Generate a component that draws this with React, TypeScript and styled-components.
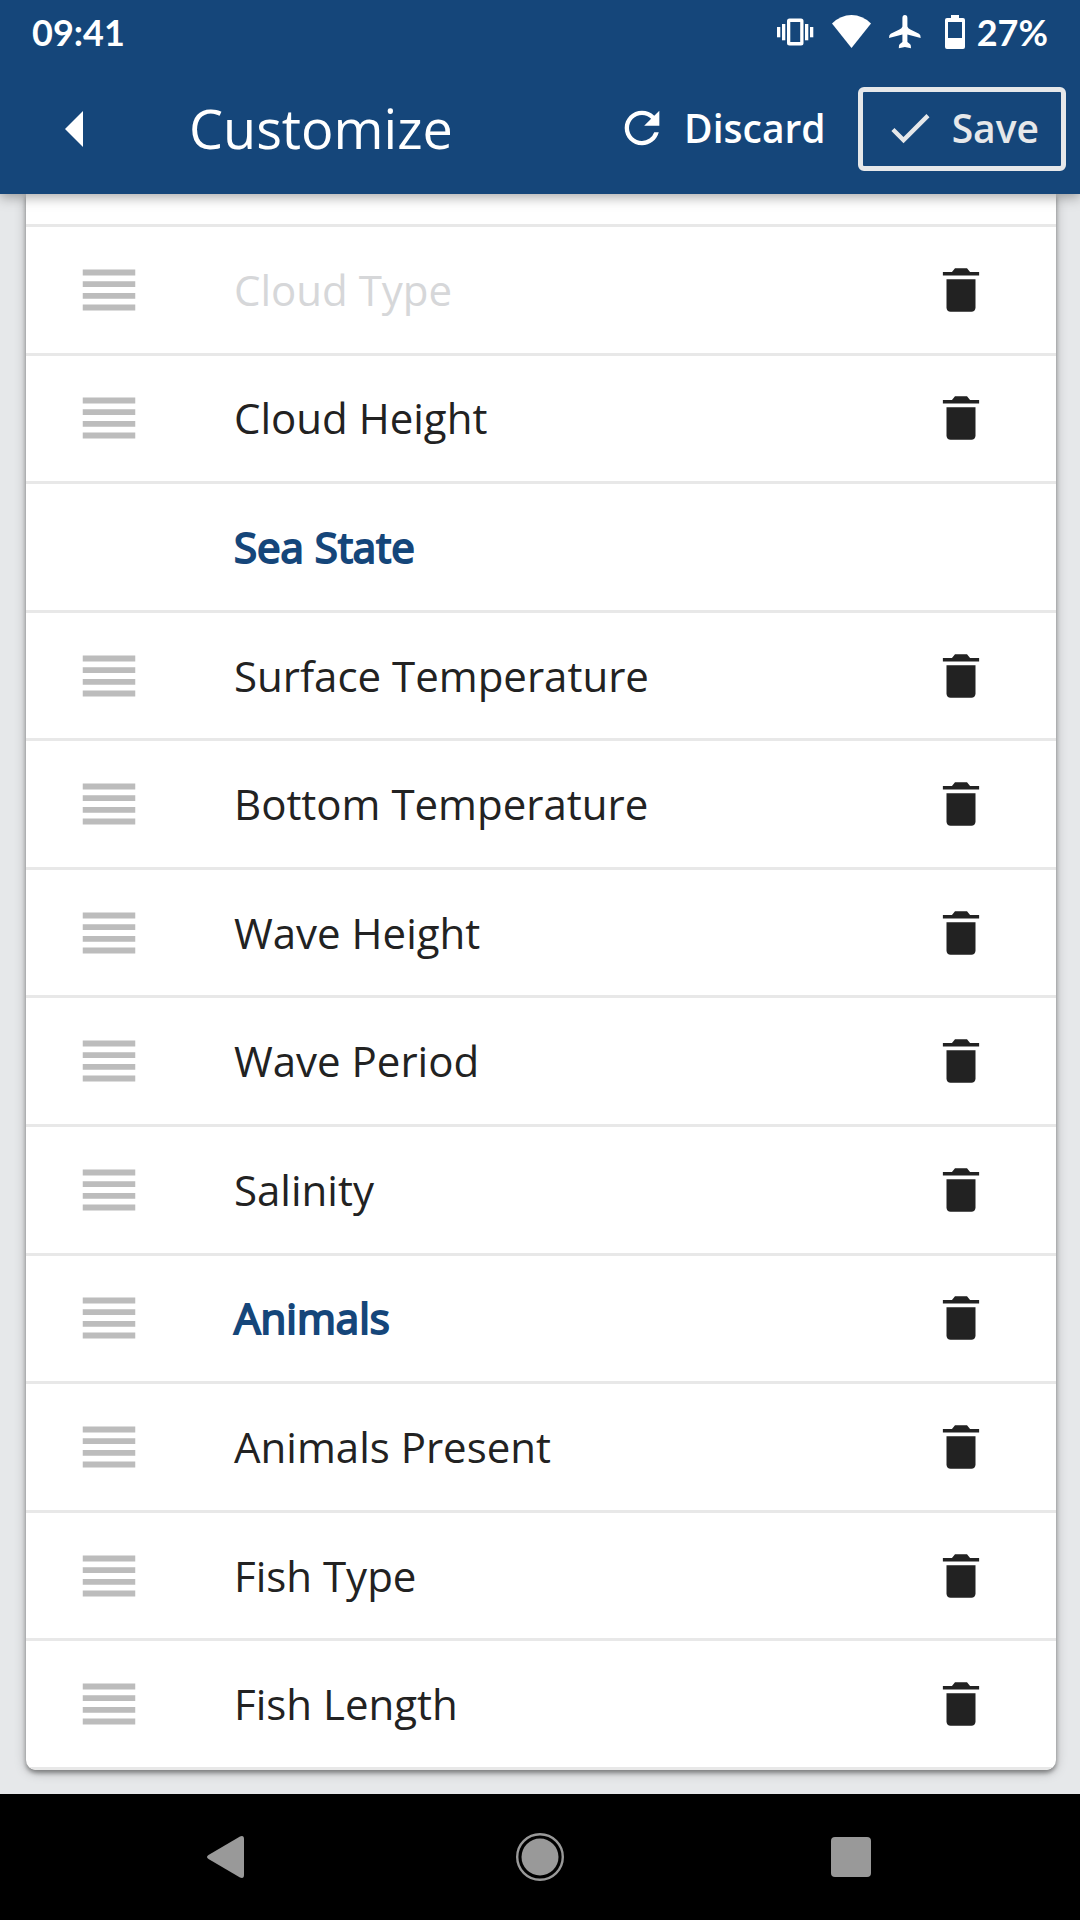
import React from "react";
import styled, { createGlobalStyle } from "styled-components";
import { MdCheck, MdRefresh, MdReorder } from "react-icons/md";

const color = {
  brand: "#15467a",
  page: "#e6e8ea",
  rule: "#e8e8e8",
  ink: "#222222",
  muted: "#d6d7d9",
  handle: "#bcbcbc",
  system: "#999999",
};

const GlobalStyle = createGlobalStyle`
  *, *::before, *::after { box-sizing: border-box; }
  body {
    margin: 0;
    background: ${color.page};
    color: ${color.ink};
    font-family: "Open Sans", "Noto Sans", sans-serif;
  }
  button {
    margin: 0;
    padding: 0;
    border: 0;
    background: none;
    color: inherit;
    font: inherit;
    cursor: pointer;
  }
  svg { display: block; flex: none; }
`;

const Screen = styled.div`
  display: flex;
  flex-direction: column;
  min-height: 100vh;
`;

const Header = styled.header`
  position: relative;
  z-index: 1;
  background: ${color.brand};
  color: #ffffff;
  box-shadow: 0 3px 12px rgba(0, 0, 0, 0.35);
`;

const StatusBar = styled.div`
  display: flex;
  align-items: center;
  justify-content: space-between;
  height: 63px;
  padding: 0 32px;
  font: 700 36px/44px Lato, "Open Sans", sans-serif;
`;

const StatusIcons = styled.div`
  display: flex;
  align-items: center;
  gap: 18px;
`;

const Battery = styled.div`
  display: flex;
  align-items: center;
  gap: 12px;
  margin-left: 6px;
`;

const Toolbar = styled.div`
  display: flex;
  align-items: center;
  height: 131px;
  padding: 0 14px 0 49px;
`;

const BackButton = styled.button`
  padding: 24px 16px;
`;

const Title = styled.h1`
  flex: 1;
  margin: 0;
  padding: 0 0 2px 90px;
  font-size: 54px;
  line-height: 72px;
  font-weight: 400;
`;

const ToolbarButton = styled.button<{ $outlined?: boolean }>`
  display: flex;
  align-items: center;
  gap: 16px;
  height: 84px;
  padding: 0 ${(p) => (p.$outlined ? 22 : 32)}px 2px 21px;
  border: ${(p) => (p.$outlined ? `5px solid ${color.page}` : "0")};
  border-radius: 6px;
  color: ${(p) => (p.$outlined ? color.page : "#ffffff")};
  font-size: 39px;
  line-height: 52px;
  font-weight: 600;
`;

const Main = styled.main`
  flex: 1;
  display: flex;
  flex-direction: column;
  padding: 0 24px 24px 26px;
`;

const Card = styled.ul`
  flex: 1;
  display: flex;
  flex-direction: column;
  margin: 0;
  padding: 0;
  list-style: none;
  overflow: hidden;
  background: #ffffff;
  border-radius: 0 0 10px 10px;
  box-shadow: 0 3px 4px rgba(0, 0, 0, 0.35), 0 2px 12px rgba(0, 0, 0, 0.25);
`;

const HiddenRowEdge = styled.li`
  height: 33px;
  border-bottom: 3px solid ${color.rule};
`;

const Row = styled.li`
  flex: 1 0 120px;
  display: flex;
  align-items: center;
  padding: 0 66px 0 48px;
  border-bottom: 3px solid ${color.rule};
`;

const HandleSlot = styled.div`
  display: flex;
  width: 160px;
`;

const HandleButton = styled.button`
  color: ${color.handle};
  cursor: grab;
`;

const Label = styled.span<{ $muted?: boolean }>`
  flex: 1;
  font-size: 42px;
  line-height: 60px;
  color: ${(p) => (p.$muted ? color.muted : color.ink)};
`;

const SectionLabel = styled.h2`
  flex: 1;
  margin: 0;
  font-size: 42px;
  line-height: 60px;
  font-weight: 400;
  color: ${color.brand};
  -webkit-text-stroke: 2px ${color.brand};
`;

const NavBar = styled.nav`
  display: flex;
  align-items: center;
  justify-content: center;
  gap: 248px;
  height: 126px;
  background: #000000;
  color: ${color.system};
`;

type Item = { label: string; section?: boolean; muted?: boolean; locked?: boolean };

const items: Item[] = [
  { label: "Cloud Type", muted: true },
  { label: "Cloud Height" },
  { label: "Sea State", section: true, locked: true },
  { label: "Surface Temperature" },
  { label: "Bottom Temperature" },
  { label: "Wave Height" },
  { label: "Wave Period" },
  { label: "Salinity" },
  { label: "Animals", section: true },
  { label: "Animals Present" },
  { label: "Fish Type" },
  { label: "Fish Length" },
];

const BackIcon = () => (
  <svg width="18" height="36" viewBox="0 0 18 36" fill="currentColor" aria-hidden>
    <path d="M18 0v36L0 18z" />
  </svg>
);

const VibrateIcon = () => (
  <svg width="37" height="28" viewBox="0 0 37 28" fill="currentColor" aria-hidden>
    <rect x="0" y="9" width="3.3" height="10.300" />
    <rect x="5" y="6" width="3.3" height="16.300" />
    <rect x="28" y="6" width="3.3" height="16.300" />
    <rect x="33" y="9" width="3.3" height="10.300" />
    <path
      fillRule="evenodd"
      d="M12.500.500h11.500a2.500 2.500 0 0 1 2.500 2.500v22a2.500 2.500 0 0 1-2.500 2.500H12.500A2.500 2.500 0 0 1 10 25V3A2.500 2.500 0 0 1 12.500.500zM13.300 4v20h9.900V4z"
    />
  </svg>
);

const WifiIcon = () => (
  <svg width="39" height="36" viewBox="0 0 39 36" fill="currentColor" aria-hidden>
    <path d="M0 9.500Q8.500 1 19.500 1T39 9.500L19.500 34z" />
  </svg>
);

const AirplaneIcon = () => (
  <svg width="32" height="34" viewBox="0 0 32 34" fill="currentColor" aria-hidden>
    <path d="M13.400 3q0-3 2.500-3t2.500 3v8.500q.5 1.800 3 3l8.600 4.300q1.700 1 1.700 4.200L18.400 19.500V27l2.800 2.300q.8.700.8 4L15.900 32l-6.100 1.300q0-3.300.8-4L13.400 27v-7.500L0 23q0-3.200 1.700-4.200l8.700-4.300q2.500-1.200 3-3z" />
  </svg>
);

const BatteryIcon = () => (
  <svg width="20" height="34" viewBox="0 0 20 34" fill="currentColor" aria-hidden>
    <path
      fillRule="evenodd"
      d="M6 0h8v3h4a2 2 0 0 1 2 2v27a2 2 0 0 1-2 2H2a2 2 0 0 1-2-2V5a2 2 0 0 1 2-2h4zM3 7v16h14V7z"
    />
  </svg>
);

const TrashIcon = () => (
  <svg width="58" height="58" viewBox="0 0 512 512" fill={color.ink} aria-hidden>
    <path d="M128 412c0 20 16 36 36 36h184c20 0 36-16 36-36V160H128zM416 96h-80l-27-32H203l-27 32H96v32h320z" />
  </svg>
);

function ListRow({ item }: { item: Item }) {
  return (
    <Row>
      <HandleSlot>
        {!item.locked && (
          <HandleButton aria-label={`Reorder ${item.label}`}>
            <MdReorder size={70} />
          </HandleButton>
        )}
      </HandleSlot>
      {item.section ? (
        <SectionLabel>{item.label}</SectionLabel>
      ) : (
        <Label $muted={item.muted}>{item.label}</Label>
      )}
      {!item.locked && (
        <button aria-label={`Delete ${item.label}`}>
          <TrashIcon />
        </button>
      )}
    </Row>
  );
}

export default function App() {
  return (
    <Screen>
      <GlobalStyle />
      <Header>
        <StatusBar>
          <span>09:41</span>
          <StatusIcons>
            <VibrateIcon />
            <WifiIcon />
            <AirplaneIcon />
            <Battery>
              <BatteryIcon />
              <span>27%</span>
            </Battery>
          </StatusIcons>
        </StatusBar>
        <Toolbar>
          <BackButton aria-label="Back">
            <BackIcon />
          </BackButton>
          <Title>Customize</Title>
          <ToolbarButton>
            <MdRefresh size={52} />
            Discard
          </ToolbarButton>
          <ToolbarButton $outlined>
            <MdCheck size={52} />
            Save
          </ToolbarButton>
        </Toolbar>
      </Header>
      <Main>
        <Card>
          <HiddenRowEdge aria-hidden />
          {items.map((item) => (
            <ListRow key={item.label} item={item} />
          ))}
        </Card>
      </Main>
      <NavBar aria-label="System navigation">
        <button aria-label="System back">
          <svg width="64" height="64" viewBox="0 0 64 64" fill="currentColor" aria-hidden>
            <path d="M12.500 30 44 11.500q4-1.500 4 2.500v36q0 4-4 2.500L12.500 34q-3-2 0-4z" />
          </svg>
        </button>
        <button aria-label="Home">
          <svg width="64" height="64" viewBox="0 0 64 64" fill="currentColor" aria-hidden>
            <circle cx="32" cy="32" r="22.800" fill="none" stroke="currentColor" strokeWidth="2.400" />
            <circle cx="32" cy="32" r="18.500" />
          </svg>
        </button>
        <button aria-label="Recent apps">
          <svg width="64" height="64" viewBox="0 0 64 64" fill="currentColor" aria-hidden>
            <rect x="11" y="12" width="40" height="40" rx="4" />
          </svg>
        </button>
      </NavBar>
    </Screen>
  );
}
